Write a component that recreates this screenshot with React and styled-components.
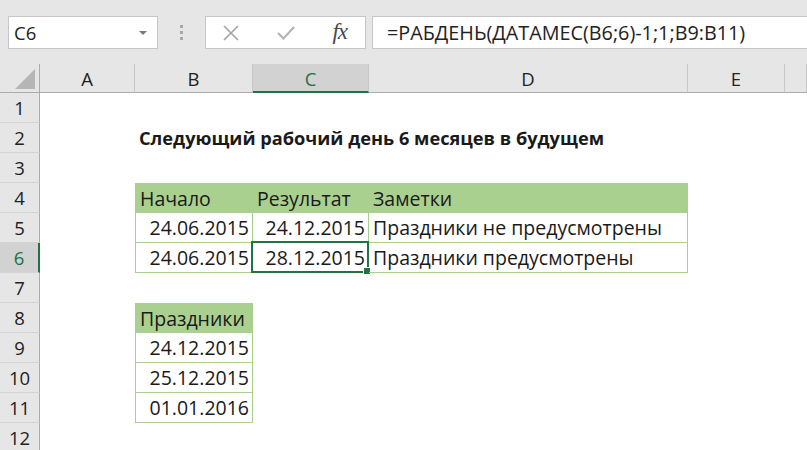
import React from "react";
import styled, { createGlobalStyle, css } from "styled-components";

const GlobalStyle = createGlobalStyle`
  html, body { margin: 0; padding: 0; background: #ffffff; }
  body { font-family: "Open Sans", "Noto Sans", sans-serif; }
`;

const GREEN = "#217346";
const TABLE_GREEN = "#a9d08e";

const Window = styled.div`
  width: 807px;
  height: 450px;
  overflow: hidden;
  background: #ffffff;
  display: flex;
  flex-direction: column;
`;

const FormulaBar = styled.div`
  height: 64px;
  flex: none;
  background: #e6e6e6;
  display: flex;
  align-items: flex-start;
  padding: 16px 0 0 8px;
  box-sizing: border-box;
`;

const Box = styled.div`
  height: 33px;
  box-sizing: border-box;
  background: #ffffff;
  border: 1px solid #c6c6c6;
  display: flex;
  align-items: center;
`;

const NameBox = styled(Box)`
  width: 150px;
  padding: 0 10px 0 5px;
  justify-content: space-between;
  font-size: 18.5px;
  color: #222;
`;

const Caret = styled.span`
  width: 0;
  height: 0;
  border-left: 4px solid transparent;
  border-right: 4px solid transparent;
  border-top: 4px solid #7a7a7a;
`;

const Grip = styled.div`
  width: 47px;
  height: 33px;
  display: flex;
  flex-direction: column;
  align-items: center;
  justify-content: center;
  gap: 3px;
`;

const GripDot = styled.span`
  width: 3px;
  height: 3px;
  background: #a8a8a8;
`;

const FnBox = styled(Box)`
  width: 161px;
  padding: 0 16px 0 16px;
  justify-content: space-between;
`;

const FxLabel = styled.span`
  font-family: "Liberation Serif", "DejaVu Serif", serif;
  font-style: italic;
  font-size: 23px;
  color: #4a4a4a;
  letter-spacing: -1px;
  margin-right: 2px;
  position: relative;
  top: -1px;
`;

const FormulaInput = styled(Box)`
  flex: 1;
  margin-left: 6px;
  padding-left: 14px;
  border-right: none;
  font-size: 19.8px;
  color: #222;
  white-space: nowrap;
`;

const Sheet = styled.div`
  display: grid;
  grid-template-columns: 40px 95px 118px 116px 319px 97px 22px;
  grid-template-rows: 29px repeat(12, 30px);
  background: #ffffff;
`;

const ColHeader = styled.div`
  background: ${(p) => (p.$active ? "#d2d2d2" : "#e6e6e6")};
  color: ${(p) => (p.$active ? GREEN : "#222")};
  border-right: 1px solid #c6c6c6;
  border-bottom: ${(p) => (p.$active ? `2px solid ${GREEN}` : "1px solid #ababab")};
  box-sizing: border-box;
  display: flex;
  align-items: center;
  justify-content: center;
  font-size: 18.5px;
  padding-top: ${(p) => (p.$active ? "2px" : "0")};
`;

const Corner = styled.div`
  background: #e6e6e6;
  border-right: 1px solid #ababab;
  border-bottom: 1px solid #ababab;
  box-sizing: border-box;
  display: flex;
  align-items: flex-end;
  justify-content: flex-end;
  padding: 0 4px 3px 0;
`;

const CornerTriangle = styled.span`
  width: 0;
  height: 0;
  border-left: 20px solid transparent;
  border-bottom: 20px solid #b5b5b5;
`;

const RowHeader = styled.div`
  background: ${(p) => (p.$active ? "#d2d2d2" : "#e6e6e6")};
  color: ${(p) => (p.$active ? GREEN : "#222")};
  border-right: ${(p) => (p.$active ? `2px solid ${GREEN}` : "1px solid #ababab")};
  border-bottom: 1px solid #d4d4d4;
  box-sizing: border-box;
  display: flex;
  align-items: center;
  justify-content: center;
  font-size: 18.5px;
`;

const Cell = styled.div`
  position: relative;
  box-sizing: border-box;
  display: flex;
  align-items: center;
  padding: 0 3px 0 4px;
  font-size: 19.5px;
  color: #1a1a1a;
  white-space: nowrap;
  justify-content: ${(p) => (p.$align === "right" ? "flex-end" : "flex-start")};
  ${(p) => p.$bold && css`font-weight: 700; font-size: 18.2px;`}
  ${(p) =>
    p.$table &&
    css`
      border-right: 1px solid ${TABLE_GREEN};
      border-bottom: 1px solid ${TABLE_GREEN};
    `}
  ${(p) => p.$first && css`border-left: 1px solid ${TABLE_GREEN};`}
  ${(p) => p.$head && css`background: ${TABLE_GREEN}; border-top: 1px solid ${TABLE_GREEN};`}
`;

const Selection = styled.span`
  position: absolute;
  top: -2px;
  left: -2px;
  right: -1px;
  bottom: -1px;
  border: 2px solid ${GREEN};
  pointer-events: none;
`;

const FillHandle = styled.span`
  position: absolute;
  right: -4px;
  bottom: -4px;
  width: 6px;
  height: 6px;
  background: ${GREEN};
  border: 1px solid #ffffff;
`;

const columns = ["A", "B", "C", "D", "E", ""];

// row data: map column index (0=A ... 5=F) to cell props
const rows = {
  2: { 1: { text: "Следующий рабочий день 6 месяцев в будущем", bold: true } },
  4: {
    1: { text: "Начало", head: true, table: true, first: true },
    2: { text: "Результат", head: true, table: true },
    3: { text: "Заметки", head: true, table: true },
  },
  5: {
    1: { text: "24.06.2015", align: "right", table: true, first: true },
    2: { text: "24.12.2015", align: "right", table: true },
    3: { text: "Праздники не предусмотрены", table: true },
  },
  6: {
    1: { text: "24.06.2015", align: "right", table: true, first: true },
    2: { text: "28.12.2015", align: "right", table: true, selected: true },
    3: { text: "Праздники предусмотрены", table: true },
  },
  8: { 1: { text: "Праздники", head: true, table: true, first: true } },
  9: { 1: { text: "24.12.2015", align: "right", table: true, first: true } },
  10: { 1: { text: "25.12.2015", align: "right", table: true, first: true } },
  11: { 1: { text: "01.01.2016", align: "right", table: true, first: true } },
};

const XIcon = () => (
  <svg width="18" height="18" viewBox="0 0 18 18">
    <path d="M2 2 L16 16 M16 2 L2 16" stroke="#a3a3a3" strokeWidth="1.6" fill="none" />
  </svg>
);

const CheckIcon = () => (
  <svg width="20" height="18" viewBox="0 0 20 18">
    <path d="M2 9 L7.5 14.5 L18 3" stroke="#b3b3b3" strokeWidth="2.2" fill="none" />
  </svg>
);

export default function App() {
  const rowNums = Array.from({ length: 12 }, (_, i) => i + 1);
  return (
    <Window>
      <GlobalStyle />
      <FormulaBar>
        <NameBox>
          <span>C6</span>
          <Caret />
        </NameBox>
        <Grip>
          <GripDot />
          <GripDot />
          <GripDot />
        </Grip>
        <FnBox>
          <XIcon />
          <CheckIcon />
          <FxLabel>fx</FxLabel>
        </FnBox>
        <FormulaInput>=РАБДЕНЬ(ДАТАМЕС(B6;6)-1;1;B9:B11)</FormulaInput>
      </FormulaBar>
      <Sheet>
        <Corner>
          <CornerTriangle />
        </Corner>
        {columns.map((c, i) => (
          <ColHeader key={`h${i}`} $active={c === "C"}>
            {c}
          </ColHeader>
        ))}
        {rowNums.map((r) => (
          <React.Fragment key={r}>
            <RowHeader $active={r === 6}>{r}</RowHeader>
            {columns.map((_, ci) => {
              const d = (rows[r] && rows[r][ci]) || {};
              return (
                <Cell
                  key={ci}
                  $align={d.align}
                  $bold={d.bold}
                  $table={d.table}
                  $first={d.first}
                  $head={d.head}
                >
                  {d.text}
                  {d.selected && (
                    <Selection>
                      <FillHandle />
                    </Selection>
                  )}
                </Cell>
              );
            })}
          </React.Fragment>
        ))}
      </Sheet>
    </Window>
  );
}
